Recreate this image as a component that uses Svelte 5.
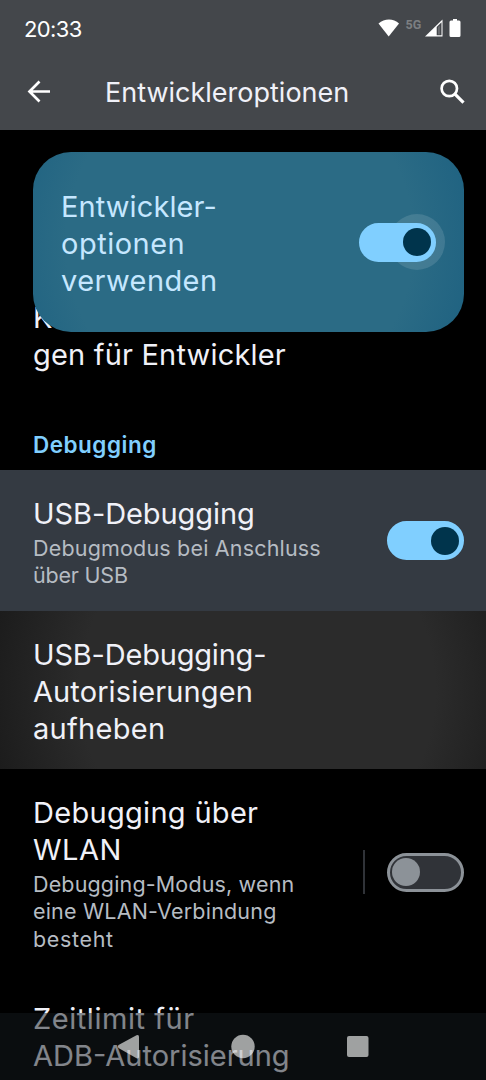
<script lang="ts">
  interface Line {
    text: string;
    tracking?: number;
  }

  interface Option {
    id: string;
    title: Line[];
    summary?: Line[];
    checked?: boolean;
    divided?: boolean;
  }

  const options: Option[] = [
    {
      id: "usb",
      title: [{ text: "USB-Debugging", tracking: -0.08 }],
      summary: [
        { text: "Debugmodus bei Anschluss", tracking: 0.18 },
        { text: "über USB", tracking: -0.2 }
      ],
      checked: true
    },
    {
      id: "revoke",
      title: [
        { text: "USB-Debugging-", tracking: -0.2 },
        { text: "Autorisierungen", tracking: 0.1 },
        { text: "aufheben", tracking: 0.3 }
      ]
    },
    {
      id: "wlan",
      title: [
        { text: "Debugging über", tracking: 0.3 },
        { text: "WLAN", tracking: 0.5 }
      ],
      summary: [
        { text: "Debugging-Modus, wenn", tracking: 0.15 },
        { text: "eine WLAN-Verbindung", tracking: 0.19 },
        { text: "besteht", tracking: 0.65 }
      ],
      checked: false,
      divided: true
    },
    {
      id: "timeout",
      title: [
        { text: "Zeitlimit für", tracking: 0.55 },
        { text: "ADB-Autorisierung" }
      ]
    }
  ];
</script>

{#snippet lines(items: Line[])}
  {#each items as { text, tracking = 0 } (text)}
    <span class="line" style:letter-spacing="{tracking}px">{text}</span>
  {/each}
{/snippet}

{#snippet toggle(checked: boolean, label: string)}
  <button class="switch" class:on={checked} role="switch" aria-checked={checked} aria-label={label} type="button">
    <span class="thumb"></span>
  </button>
{/snippet}

<div class="screen">
  <header>
    <div class="status">
      <span class="clock">20:33</span>
      <svg class="indicators" width="84" height="22" viewBox="0 0 84 22" aria-hidden="true">
        <path d="M.5 5.500C6.500.300 15.500.300 21 5.500L10.700 18.500Z" fill="#fff" />
        <text x="27.500" y="11">5G</text>
        <path d="M47 18.500 64.500 1.500V18.500Z" fill="#fff" />
        <path d="M58.700 9 63.500 4.300V17.300H58.700Z" fill="#44474b" />
        <path d="M60.200 9 61.700 7.500V16.500H60.200Z" fill="#fff" fill-opacity=".25" />
        <path d="M75 1h4v1.500h2q1.500 0 1.500 1.500v13.500q0 1.500-1.500 1.500h-8q-1.500 0-1.500-1.500V4q0-1.500 1.500-1.500h2Z" fill="#fff" />
      </svg>
    </div>
    <div class="appbar">
      <svg width="24" height="24" viewBox="0 0 24 24" aria-hidden="true">
        <path d="M12.500 1.500 2.500 11.500 12.500 21.500M2.500 11.500H23" fill="none" stroke="#fff" stroke-width="2.700" />
      </svg>
      <h1>Entwickleroptionen</h1>
      <svg class="search" width="26" height="26" viewBox="0 0 26 26" aria-hidden="true">
        <circle cx="10.300" cy="9.500" r="7.700" fill="none" stroke="#fff" stroke-width="2.700" />
        <path d="M15.500 14.700 24.500 23.700" stroke="#fff" stroke-width="3.200" />
      </svg>
    </div>
  </header>

  <main>
    <section class="intro">
      <div class="master">
        <span class="title">
          {@render lines([
            { text: "Entwickler-", tracking: 0.1 },
            { text: "optionen", tracking: 0.5 },
            { text: "verwenden", tracking: 0.4 }
          ])}
        </span>
        {@render toggle(true, "Entwickleroptionen verwenden")}
      </div>
      <p class="title behind">
        {@render lines([
          { text: "Kurzbefehlseinstellun" },
          { text: "gen für Entwickler", tracking: 0.19 }
        ])}
      </p>
    </section>

    <h2>Debugging</h2>

    {#each options as { id, title, summary, checked, divided } (id)}
      <div class="option {id}">
        <div class="copy">
          <span class="title">{@render lines(title)}</span>
          {#if summary}
            <span class="summary">{@render lines(summary)}</span>
          {/if}
        </div>
        {#if divided}
          <span class="divider"></span>
        {/if}
        {#if checked !== undefined}
          {@render toggle(checked, title[0].text)}
        {/if}
      </div>
    {/each}
  </main>

  <!-- Translucent navigation bar, the list scrolls underneath it -->
  <nav>
    <svg width="486" height="67" viewBox="0 0 486 67" aria-hidden="true">
      <g fill="#fff" fill-opacity=".61">
        <path d="M118.500 32 136.500 22.200q2.500-1 2.500 1.500v20q0 2.500-2.500 1.500L118.500 35q-1.500-1.500 0-3Z" />
        <circle cx="243" cy="33.500" r="11.700" />
        <rect x="347" y="23" width="21.500" height="21" rx="2" />
      </g>
    </svg>
  </nav>
</div>

<style>
  :global(body) {
    background: #000;
  }

  .screen {
    position: relative;
    width: 486px;
    height: 1080px;
    overflow: hidden;
    background: #000;
    color: #f0f1f8;
    font-family: Inter, sans-serif;
  }

  header {
    box-sizing: border-box;
    height: 130px;
    background: #44474b;
  }

  .status {
    display: flex;
    justify-content: space-between;
    align-items: center;
    height: 56px;
    padding: 0 24px;
  }

  .clock {
    margin-top: 2px;
    color: #fff;
    font-size: 22px;
    letter-spacing: -0.6px;
  }

  .indicators {
    margin-top: 1px;

    text {
      fill: #7c7f82;
      font: 700 12.5px Roboto, sans-serif;
    }
  }

  .appbar {
    display: flex;
    align-items: center;
    height: 72px;
    padding: 0 21px 0 27px;
  }

  h1 {
    margin: 1px 0 0 54px;
    font-weight: 400;
    font-size: 27px;
    line-height: 36px;
    white-space: nowrap;
  }

  .search {
    margin-left: auto;
  }

  .line {
    display: block;
    white-space: nowrap;
  }

  .title {
    display: block;
    font-size: 29px;
    line-height: 37px;
  }

  .summary {
    display: block;
    margin-top: 2.5px;
    color: #b6bcc3;
    font-size: 21.5px;
    line-height: 27.5px;
  }

  .intro {
    height: 284px;
    padding: 22px 22px 0 33px;
  }

  .master {
    position: relative;
    z-index: 1;
    display: flex;
    justify-content: space-between;
    align-items: center;
    box-sizing: border-box;
    height: 180.4px;
    padding: 3px 28px 0;
    border-radius: 38px;
    background: radial-gradient(circle at 48% 50%, #2b6b85 72%, #1f6281 100%);
    color: #c5e7ff;

    .switch {
      margin-top: -3px;
    }

    /* Touch halo behind the thumb */
    .switch::before {
      position: absolute;
      top: -11.5px;
      right: -11.5px;
      z-index: -1;
      width: 56px;
      height: 56px;
      border-radius: 50%;
      background: rgb(255 255 255 / 12%);
      content: "";
    }
  }

  /* Scrolled half under the master switch card */
  .behind {
    margin: -33.9px 0 0;
  }

  h2 {
    box-sizing: border-box;
    height: 56px;
    margin: -22px 0 0;
    padding: 16px 33px 0;
    color: #80cfff;
    font-weight: 600;
    font-size: 22.5px;
    line-height: 30px;
    letter-spacing: 0.5px;
  }

  .option {
    display: flex;
    align-items: center;
    box-sizing: border-box;
    height: 205.5px;
    padding: 25px 22px 0 33px;

    .copy {
      align-self: flex-start;
      flex: 1;
    }

    .switch,
    .divider {
      margin-top: -25px;
    }
  }

  .usb {
    height: 141.4px;
    background: #343a42;
  }

  .revoke {
    height: 158px;
    background: radial-gradient(circle at 53% 50%, #2b2b2b 66%, #1c1c1c 100%);
  }

  .divider {
    width: 1.5px;
    height: 44px;
    margin-right: 22px;
    background: #303338;
  }

  .switch {
    position: relative;
    display: flex;
    flex: none;
    align-items: center;
    box-sizing: border-box;
    width: 77.5px;
    height: 39px;
    padding: 0 2.5px;
    border: 3px solid #8c9298;
    border-radius: 20px;
    background: #303338;

    &.on {
      justify-content: flex-end;
      border-color: #80cfff;
      background: #80cfff;

      .thumb {
        background: #00344c;
      }
    }
  }

  .thumb {
    width: 28px;
    height: 28px;
    border-radius: 50%;
    background: #8c9298;
  }

  nav {
    position: absolute;
    inset: auto 0 0;
    height: 67px;
    background: rgb(20 25 29 / 50%);

    svg {
      display: block;
    }
  }
</style>
